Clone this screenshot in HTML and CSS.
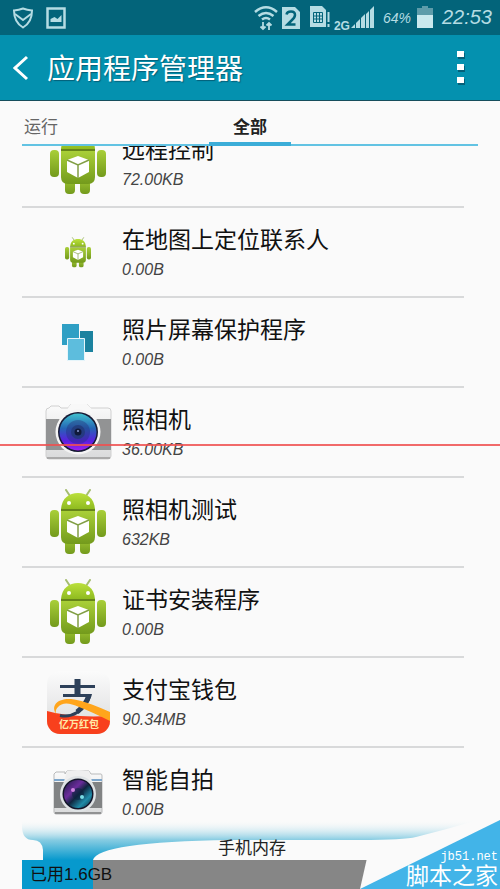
FILE: index.html
```html
<!DOCTYPE html>
<html lang="zh-CN">
<head>
    <meta charset="UTF-8">
    <meta name="viewport" content="width=device-width, initial-scale=1.0">
    <title>应用程序管理器</title>
    <link rel="stylesheet" href="styles.css">
</head>
<body>
    <!-- shared icon shapes -->
    <svg class="defs" width="0" height="0" aria-hidden="true">
        <defs>
            <linearGradient id="green" x1="0" y1="0" x2="0" y2="1">
                <stop offset="0" stop-color="#a9cf38"/>
                <stop offset="1" stop-color="#739a1c"/>
            </linearGradient>
            <linearGradient id="head" x1="0" y1="0" x2="0" y2="1">
                <stop offset="0" stop-color="#bbe03c"/>
                <stop offset="1" stop-color="#8fbb20"/>
            </linearGradient>
            <linearGradient id="silver" x1="0" y1="0" x2="0" y2="1">
                <stop offset="0" stop-color="#fbfbfb"/>
                <stop offset="1" stop-color="#d9dadb"/>
            </linearGradient>
            <linearGradient id="lens" x1="0" y1="0" x2="0" y2="1">
                <stop offset="0" stop-color="#3fc0cd"/>
                <stop offset="0.4" stop-color="#2565b5"/>
                <stop offset="0.75" stop-color="#5a1ee0"/>
                <stop offset="1" stop-color="#a020f0"/>
            </linearGradient>
            <linearGradient id="lens2" x1="0" y1="0" x2="1" y2="1">
                <stop offset="0.1" stop-color="#32205c"/>
                <stop offset="0.35" stop-color="#6c2c9c"/>
                <stop offset="0.52" stop-color="#10263f"/>
                <stop offset="0.75" stop-color="#1f8ba8"/>
                <stop offset="1" stop-color="#0b2536"/>
            </linearGradient>
            <symbol id="android" viewBox="0 0 56 66">
                <path d="M16 1l6 9M40 1l-6 9" stroke="#a5bd70" stroke-width="2" stroke-linecap="round"/>
                <rect x="15" y="46" width="10" height="19" rx="4" fill="url(#green)"/>
                <rect x="30" y="46" width="10" height="19" rx="4" fill="url(#green)"/>
                <rect x="0" y="21" width="9" height="27" rx="4" fill="url(#green)"/>
                <rect x="47" y="21" width="9" height="27" rx="4" fill="url(#green)"/>
                <path d="M11 22h34v26q0 7-7 7H18q-7 0-7-7z" fill="url(#green)"/>
                <path d="M11 20C12 9 19 4 28 4s16 5 17 16z" fill="url(#head)"/>
                <path d="M11 21h34" stroke="#668519" stroke-width="2"/>
                <circle cx="19" cy="14" r="2" fill="#fff"/>
                <circle cx="38" cy="14" r="2" fill="#fff"/>
                <path d="M28 27l11 4v12l-11 6-11-6V31z" fill="#fff"/>
                <path d="M17 31l11 5 11-5M28 36v13" fill="none" stroke="#829f45" stroke-width="1.5"/>
            </symbol>
        </defs>
    </svg>

    <div class="statusbar">
        <svg width="20" height="22" viewBox="0 0 20 22" fill="none" stroke="#b5dce3" stroke-width="2">
            <path d="M10 1.500Q14 3 19 3.500C19 11 16 17 10 20.500C4 17 1 11 1 3.500Q6 3 10 1.500z"/>
            <path d="M2 7l8 6 8-6"/>
        </svg>
        <svg class="gallery" width="20" height="22" viewBox="0 0 20 22">
            <path d="M1.500 1.500h17v19h-17z" fill="none" stroke="#b5dce3" stroke-width="2.500"/>
            <path d="M4.500 15v-3l4-2 3 2 4-4v7z" fill="#b5dce3"/>
        </svg>
        <span class="spacer"></span>
        <svg class="wifi" width="24" height="26" viewBox="0 0 24 26" fill="none" stroke="#b5dce3" stroke-width="2.500">
            <path d="M1 7Q12-2.500 23 7M4.500 11q7.500-6 15 0M8 14.500q4-3 8 0"/>
            <path d="M9 17v7M6.500 21.500L9 24l2.500-2.500M15 25v-7M12.500 20.500L15 18l2.500 2.500" stroke-width="1.800"/>
        </svg>
        <svg class="sim" width="18" height="24" viewBox="0 0 18 24">
            <path d="M0 1h13l5 5v17H0z" fill="#b5dce3"/>
            <path d="M4.500 8.500Q5 5.500 9 5.500q4 0 4 3.500 0 2.500-3.500 5.500L5.500 18.500h8" fill="none" stroke="#03647a" stroke-width="2.500"/>
        </svg>
        <svg class="sms" width="20" height="23" viewBox="0 0 20 23">
            <path d="M0 0h12l4 4v17H0z" fill="#b5dce3"/>
            <path d="M3.500 6.500h9v10h-9zM3.500 10h9M3.500 13h9M6.500 6.500v10M9.500 6.500v10" fill="none" stroke="#03647a"/>
            <path d="M16 4h4v18h-4z" fill="#03647a"/>
            <path d="M18.500 6v10M18.500 18v3" stroke="#b5dce3" stroke-width="2"/>
        </svg>
        <span class="network">2G</span>
        <svg class="signal" width="23" height="23" viewBox="0 0 23 23" fill="#b5dce3">
            <path d="M0 22l4-4v4zM5 17l4-4v9H5zM10 12l4-4v14h-4zM15 8l3-3v17h-3zM19 4l4-4v22h-4z"/>
        </svg>
        <span class="percent">64%</span>
        <svg class="battery" width="16" height="23" viewBox="0 0 16 23">
            <path d="M5 0h6v2h5v7H0V2h5z" fill="#5d9caa"/>
            <path d="M0 9h16v13H0z" fill="#c9e9ee"/>
        </svg>
        <span class="clock">22:53</span>
    </div>

    <header class="header">
        <button class="back" aria-label="返回">
            <svg width="16" height="26" viewBox="0 0 16 26" fill="none" stroke="#fff" stroke-width="3">
                <path d="M14 2L2 13l12 11"/>
            </svg>
        </button>
        <h1>应用程序管理器</h1>
        <button class="more" aria-label="更多">
            <svg width="8" height="34" viewBox="0 0 8 34">
                <path d="M1 2h7v6H1zM1 15h7v6H1zM1 28h7v6H1z" fill="#046079"/>
                <path d="M0 0h7v6H0zM0 13h7v6H0zM0 26h7v6H0z" fill="#fff"/>
            </svg>
        </button>
    </header>

    <nav class="tabs">
        <button class="tab">运行</button>
        <button class="tab active">全部</button>
    </nav>

    <ul class="apps">
        <li><button class="app">
            <span class="icon"><svg width="56" height="66"><use href="#android"/></svg></span>
            <span class="info"><span class="name">远程控制</span><span class="size">72.00KB</span></span>
        </button></li>
        <li><button class="app">
            <span class="icon"><svg width="26" height="31"><use href="#android"/></svg></span>
            <span class="info"><span class="name">在地图上定位联系人</span><span class="size">0.00B</span></span>
        </button></li>
        <li><button class="app">
            <span class="icon">
                <svg width="32" height="38" viewBox="0 0 32 38">
                    <path d="M0 1h17v21H0z" fill="#2f9fc4"/>
                    <path d="M18 8h13v21H18z" fill="#1b829f"/>
                    <path d="M5.500 15.500h17v22h-17z" fill="#5dbddd" stroke="#e6f5fa"/>
                </svg>
            </span>
            <span class="info"><span class="name">照片屏幕保护程序</span><span class="size">0.00B</span></span>
        </button></li>
        <li><button class="app">
            <span class="icon">
                <svg width="67" height="56" viewBox="0 0 67 56">
                    <path d="M4 4l2-2h8l2 2h7l3-4h16l4 4h17q3 0 3 3v45q0 3-3 3H4q-3 0-3-3V7q0-3 3-3z" fill="url(#silver)" stroke="#d0d0d0"/>
                    <path d="M1 15h65v31H1z" fill="#929394"/>
                    <path d="M2 54h63" stroke="#aaa" stroke-width="2"/>
                    <path d="M23 4l3-4h16l4 4 2 11H21z" fill="#f8f8f8"/>
                    <circle cx="33" cy="28" r="22.500" fill="#f4f4f4"/>
                    <circle cx="33" cy="28" r="20" fill="#171a35"/>
                    <circle cx="33" cy="28" r="18.500" fill="url(#lens)"/>
                    <circle cx="33" cy="28" r="12" fill="#252c78" fill-opacity=".4"/>
                    <circle cx="33" cy="28" r="7" fill="#223a77" fill-opacity=".8"/>
                    <circle cx="33" cy="28" r="3.500" fill="#101a3a"/>
                    <circle cx="33" cy="27" r="1" fill="#8a9ad0"/>
                </svg>
            </span>
            <span class="info"><span class="name">照相机</span><span class="size">36.00KB</span></span>
        </button></li>
        <li><button class="app">
            <span class="icon"><svg width="56" height="66"><use href="#android"/></svg></span>
            <span class="info"><span class="name">照相机测试</span><span class="size">632KB</span></span>
        </button></li>
        <li><button class="app">
            <span class="icon"><svg width="56" height="66"><use href="#android"/></svg></span>
            <span class="info"><span class="name">证书安装程序</span><span class="size">0.00B</span></span>
        </button></li>
        <li><button class="app">
            <span class="icon">
                <svg width="63" height="63" viewBox="0 0 63 63">
                    <defs><clipPath id="round"><rect width="63" height="63" rx="13"/></clipPath></defs>
                    <g clip-path="url(#round)">
                        <path d="M0 0h63v63H0z" fill="url(#silver)"/>
                        <path d="M0 40q24 7 63 5v18H0z" fill="#f8401d"/>
                        <path d="M13 15.500h35" fill="none" stroke="#2d4059" stroke-width="3"/>
                        <path d="M30.500 8v16" fill="none" stroke="#2d4059" stroke-width="6"/>
                        <path d="M16 24.500h27q-3 10-13 17-8 5-17 3" fill="none" stroke="#2d4059" stroke-width="3"/>
                        <path d="M42 24q-3 10-12 17" fill="none" stroke="#2d4059" stroke-width="5"/>
                        <path d="M10 44C2 34 12 27 24 28q12 1 39 13v9Q45 41 32 36 17 29 11 36q-4 4-1 8z" fill="#ffa51c"/>
                    </g>
                    <text class="badge" x="32" y="57" text-anchor="middle">亿万红包</text>
                </svg>
            </span>
            <span class="info"><span class="name">支付宝钱包</span><span class="size">90.34MB</span></span>
        </button></li>
        <li><button class="app">
            <span class="icon">
                <svg width="50" height="45" viewBox="0 0 50 45">
                    <path d="M1 4l2-2h9v2l2-3q11-2 22 0l2 3h10q1 0 1 2v36q0 2-2 2H3q-2 0-2-2z" fill="url(#silver)" stroke="#b9babb"/>
                    <path d="M1 12h48v26H1z" fill="#818384"/>
                    <path d="M1 10h12M38 10h11" stroke="#7da6cb" stroke-width="2"/>
                    <path d="M2 43h46" stroke="#909192" stroke-width="2"/>
                    <path d="M14 1q11-2 22 0l4 14H10z" fill="#efefef"/>
                    <circle cx="25" cy="24" r="18" fill="#dfe3e5"/>
                    <circle cx="25" cy="24" r="15.500" fill="#14162a"/>
                    <circle cx="25" cy="24" r="14" fill="url(#lens2)"/>
                    <circle cx="25" cy="24" r="6" fill="#0e2340" fill-opacity=".6"/>
                    <circle cx="20" cy="20" r="2" fill="#d285e2"/>
                    <circle cx="29" cy="27" r="2" fill="#79dce5"/>
                </svg>
            </span>
            <span class="info"><span class="name">智能自拍</span><span class="size">0.00B</span></span>
        </button></li>
    </ul>

    <footer class="storage">
        <svg class="wave" viewBox="0 0 500 69" preserveAspectRatio="none">
            <defs>
                <linearGradient id="water" gradientUnits="userSpaceOnUse" x1="0" y1="0" x2="0" y2="40">
                    <stop offset="0" stop-color="#fafafa" stop-opacity="0"/>
                    <stop offset="0.5" stop-color="#86cce2"/>
                    <stop offset="1" stop-color="#0799cd"/>
                </linearGradient>
            </defs>
            <path d="M22 20h456v20H22z" fill="#fafafa"/>
            <path d="M22 0h456q-30 9-62 17-12 3-56 3H230Q98 22 93 40H43V30q-1-10-10-10-11 0-11-14z" fill="url(#water)"/>
        </svg>
        <div class="storage-title">手机内存</div>
        <div class="bar">
            <div class="used" style="width: 15.6%"></div>
            <span class="used-text">已用1.6GB</span>
        </div>
        <div class="watermark">
            <svg width="140" height="69" viewBox="0 0 140 69">
                <path d="M140 0v69H0L7 38z" fill="#fafafa"/>
                <path d="M140 0v69H0z" fill="#42b4e8"/>
            </svg>
            <div class="site">
                <span class="url">jb51.net</span>
                <span class="site-name">脚本之家</span>
            </div>
        </div>
    </footer>

    <div class="redline"></div>
</body>
</html>
```
FILE: styles.css
```css
* {
    box-sizing: border-box;
}

body {
    margin: 0;
    height: 100vh;
    display: flex;
    flex-direction: column;
    position: relative;
    overflow: hidden;
    background-color: #fafafa;
    color: #111;
    font-family: "Liberation Sans", "Noto Sans CJK SC", sans-serif;
}

button {
    padding: 0;
    border: none;
    background: none;
    color: inherit;
    font-family: inherit;
    cursor: pointer;
}

svg {
    display: block;
    flex-shrink: 0;
}

.defs {
    position: absolute;
}

/* status bar */
.statusbar {
    display: flex;
    align-items: center;
    height: 35px;
    padding: 0 8px 0 13px;
    background-color: #03647a;
    color: #b5dce3;
}

.gallery {
    margin-left: 13px;
}

.spacer {
    flex: 1;
}

.sim {
    margin-left: 4px;
}

.sms {
    margin-left: 10px;
}

.network {
    align-self: flex-end;
    margin-left: 4px;
    font-size: 12px;
    line-height: 18px;
    font-weight: bold;
}

.signal {
    margin-left: 1px;
}

.percent {
    margin-left: 9px;
    font-size: 14px;
    font-style: italic;
}

.battery {
    margin-left: 6px;
}

.clock {
    margin-left: 9px;
    font-size: 20px;
    font-style: italic;
}

/* title bar */
.header {
    display: flex;
    align-items: center;
    height: 66px;
    padding: 0 35px 0 13px;
    background-color: #0491af;
    border-bottom: 1px solid #164e5c;
    color: #fff;
}

.header h1 {
    flex: 1;
    margin: 0 0 0 18px;
    padding-top: 4px;
    font-size: 28px;
    line-height: 40px;
    font-weight: normal;
    text-shadow: 1px 1px 1px #046079;
}

/* tabs */
.tabs {
    display: grid;
    grid-template-columns: 1fr 82px 1fr;
    height: 45px;
    margin: 0 22px;
    border-bottom: 2px solid #62c3e3;
}

.tab {
    height: 45px;
    padding: 8px 2px 0;
    border-bottom: 4px solid transparent;
    font-size: 17px;
    text-align: left;
    color: #666;
}

.tab.active {
    border-bottom-color: #3badd8;
    text-align: center;
    font-weight: bold;
    color: #222;
}

/* app list, scrolled to the end */
.apps {
    flex: 1;
    min-height: 0;
    display: flex;
    flex-direction: column;
    justify-content: flex-end;
    margin: 0 36px 0 22px;
    padding: 0;
    overflow: hidden;
    list-style: none;
}

.apps li {
    flex-shrink: 0;
    border-bottom: 2px solid #d8d9da;
}

.apps li:last-child {
    border-bottom-color: transparent;
}

.app {
    display: flex;
    align-items: center;
    width: 100%;
    height: 88px;
    padding-left: 12px;
    text-align: left;
}

.icon {
    display: flex;
    justify-content: center;
    width: 88px;
}

.info {
    display: flex;
    flex-direction: column;
    padding-top: 6px;
}

.name {
    font-size: 23px;
    line-height: 30px;
}

.size {
    font-size: 16px;
    line-height: 30px;
    font-style: italic;
    color: #444;
}

.badge {
    font-size: 10px;
    font-weight: bold;
    fill: #ffe9a8;
}

/* storage usage */
.storage {
    position: relative;
    height: 51px;
}

.wave {
    position: absolute;
    left: 0;
    bottom: 0;
    width: 100%;
    height: 69px;
}

.storage-title {
    position: relative;
    height: 22px;
    padding-left: 4px;
    font-size: 17px;
    line-height: 22px;
    text-align: center;
    color: #222;
}

.bar {
    position: relative;
    height: 29px;
    margin: 0 22px;
    background-color: #868686;
}

.used {
    height: 100%;
    background-color: #0799cd;
}

.used-text {
    position: absolute;
    left: 8px;
    top: 0;
    font-size: 17px;
    line-height: 29px;
}

.watermark {
    position: absolute;
    right: 0;
    bottom: 0;
}

.site {
    position: absolute;
    right: 2px;
    bottom: 0;
    display: flex;
    flex-direction: column;
    align-items: flex-end;
    color: #fff;
    white-space: nowrap;
}

.url {
    font-family: "Liberation Mono", monospace;
    font-size: 12px;
    line-height: 12px;
}

.site-name {
    font-size: 23px;
    line-height: 26px;
}

.redline {
    position: absolute;
    left: 0;
    top: 50%;
    width: 100%;
    height: 2px;
    margin-top: -1px;
    background-color: rgba(238, 80, 80, 0.85);
}
```
